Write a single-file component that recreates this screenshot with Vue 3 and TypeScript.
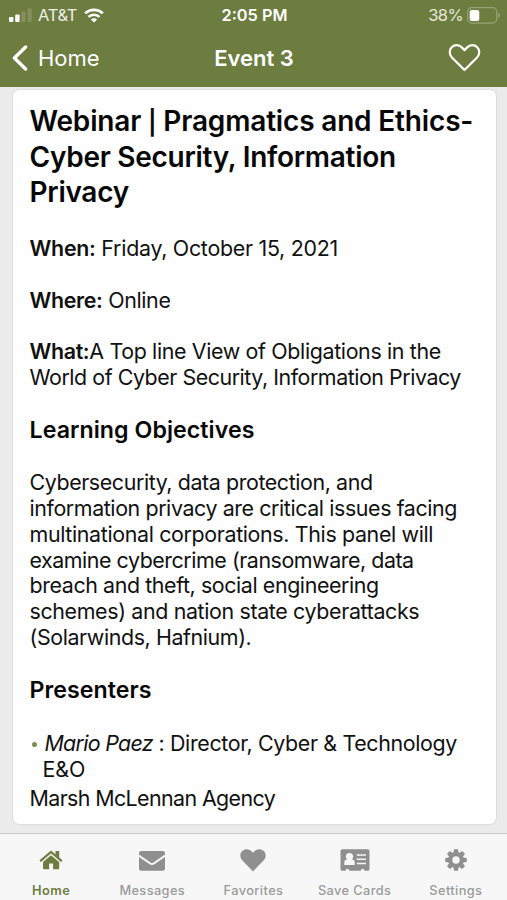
<script setup lang="ts">
interface Tab {
  id: string
  label: string
  active?: boolean
}

const tabs: Tab[] = [
  { id: 'home', label: 'Home', active: true },
  { id: 'messages', label: 'Messages' },
  { id: 'favorites', label: 'Favorites' },
  { id: 'cards', label: 'Save Cards' },
  { id: 'settings', label: 'Settings' },
]

const gearAngles: number[] = [0, 45, 90, 135, 180, 225, 270, 315]
</script>

<template>
  <div class="screen">
    <header class="top">
      <div class="status">
        <div class="carrier">
          <svg class="signal" width="23" height="14" viewBox="0 0 23 14">
            <rect x="0" y="9" width="4.4" height="5" rx="1" fill="#fff" />
            <rect x="6.2" y="6.6" width="4.4" height="7.4" rx="1" fill="#fff" />
            <rect x="12.4" y="3.6" width="4.2" height="10.4" rx="1" fill="#84915c" />
            <rect x="18.6" y="0.4" width="4.2" height="13.6" rx="1" fill="#84915c" />
          </svg>
          <span class="att">AT&amp;T</span>
          <svg class="wifi" width="20" height="15" viewBox="0 0 20 15">
            <path d="M1.2 5.4 A12.6 12.6 0 0 1 18.8 5.4" fill="none" stroke="#fff" stroke-width="2.7" />
            <path d="M4.5 8.9 A7.8 7.8 0 0 1 15.5 8.9" fill="none" stroke="#fff" stroke-width="2.5" />
            <path d="M10 14.6 L6.9 11.5 A4.4 4.4 0 0 1 13.1 11.5 Z" fill="#fff" />
          </svg>
        </div>
        <div class="clock">2:05 PM</div>
        <div class="power">
          <span class="pct">38%</span>
          <svg class="battery" width="33" height="17" viewBox="0 0 33 17">
            <rect x="0.7" y="0.7" width="29" height="15.4" rx="4" fill="none" stroke="#98a374" stroke-width="1.2" />
            <rect x="2.7" y="2.9" width="9.6" height="11" rx="2" fill="#fff" />
            <path d="M31 5.8 Q32.8 6.6 32.8 8.4 Q32.8 10.2 31 11 Z" fill="#98a374" />
          </svg>
        </div>
      </div>
      <div class="nav">
        <div class="back">
          <svg width="16" height="26" viewBox="0 0 16 26">
            <path d="M13.6 2 L2.4 13 L13.6 24" fill="none" stroke="#fff" stroke-width="3.4" stroke-linecap="round" stroke-linejoin="round" />
          </svg>
          <span class="back-label">Home</span>
        </div>
        <div class="nav-title">Event 3</div>
        <div class="fav">
          <svg width="33" height="28" viewBox="0 0 34 29">
            <path d="M17 27 L4 14 C1 10.8 .9 6.2 3.8 3.4 C6.7 .5 11.4 .6 14.2 3.5 L17 6.4 L19.8 3.5 C22.6 .6 27.3 .5 30.2 3.4 C33.1 6.2 33 10.8 30 14 Z" fill="none" stroke="#fff" stroke-width="2.3" stroke-linejoin="round" />
          </svg>
        </div>
      </div>
    </header>

    <main class="content">
      <article class="card">
        <h1 class="title">
          <span class="wide">Webinar <span class="bar">|</span> Pragmatics and Ethics-</span><br />
          Cyber Security, Information<br />
          Privacy
        </h1>
        <p class="loose"><b>When:</b> Friday, October 15, 2021</p>
        <p class="mid"><b>Where:</b> Online</p>
        <p><span class="mid"><b>What:</b>A Top line View of Obligations in the</span><br /><span class="tight">World of Cyber Security, Information Privacy</span></p>
        <h2>Learning Objectives</h2>
        <p>
          Cybersecurity, data protection, and<br />
          information privacy are critical issues facing<br />
          <span class="mid">multinational corporations. This panel will</span><br />
          <span class="tight">examine cybercrime (ransomware, data</span><br />
          breach and theft, social engineering<br />
          <span class="mid">schemes) and nation state cyberattacks</span><br />
          (Solarwinds, Hafnium).
        </p>
        <h2>Presenters</h2>
        <ul>
          <li><i class="dot"></i><span class="mid"><em>Mario Paez</em> : Director, Cyber &amp; Technology<br /><span class="eo">E&amp;O</span></span></li>
        </ul>
        <div class="org">Marsh McLennan Agency</div>
      </article>
    </main>

    <nav class="tabs">
      <div v-for="tab in tabs" :key="tab.id" class="tab" :class="{ active: tab.active }">
        <svg v-if="tab.id === 'home'" width="32" height="24" viewBox="0 0 32 24">
          <path d="M5.8 12.6 L16 4 L26.2 12.6" fill="none" stroke="currentColor" stroke-width="2.2" stroke-linecap="round" />
          <path d="M20.5 3 H24.2 V10 L20.5 6.8 Z" fill="currentColor" />
          <path d="M16 7.2 L24.2 14 V20.2 Q24.2 21.2 23.2 21.2 H18.1 V15.6 H14.1 V21.2 H9 Q8 21.2 8 20.2 V14 Z" fill="currentColor" />
        </svg>
        <svg v-else-if="tab.id === 'messages'" width="32" height="24" viewBox="0 0 32 24">
          <path d="M5.2 3 H26.8 Q29 3 29 5.2 V6.5 L17.4 14.6 Q16 15.6 14.6 14.6 L3 6.5 V5.2 Q3 3 5.2 3 Z" fill="currentColor" />
          <path d="M3 8.9 L13.6 16.3 Q16 17.9 18.4 16.3 L29 8.9 V20.6 Q29 22.8 26.8 22.8 H5.2 Q3 22.8 3 20.6 Z" fill="currentColor" />
        </svg>
        <svg v-else-if="tab.id === 'favorites'" width="32" height="24" viewBox="0 0 32 24">
          <path d="M16 23.4 L5.2 12.3 C2.6 9.5 2.7 5.2 5.5 2.8 C8.2 .4 12.1 .8 14.6 3.3 L16 4.8 L17.4 3.3 C19.9 .8 23.8 .4 26.5 2.8 C29.3 5.2 29.4 9.5 26.8 12.3 Z" fill="currentColor" />
        </svg>
        <svg v-else-if="tab.id === 'cards'" width="32" height="24" viewBox="0 0 32 24">
          <path d="M3.4 1.2 H28.6 Q30.5 1.2 30.5 3.1 V20.9 Q30.5 22.8 28.6 22.8 H25.6 Q25 20.8 23.6 20.8 Q22.2 20.8 21.6 22.8 H10.4 Q9.8 20.8 8.4 20.8 Q7 20.8 6.4 22.8 H3.4 Q1.5 22.8 1.5 20.9 V3.1 Q1.5 1.2 3.4 1.2 Z" fill="currentColor" />
          <circle cx="10.5" cy="8.6" r="3.6" fill="#f7f7f7" />
          <path d="M5.3 16.9 V14.8 Q5.3 11.7 8.2 11.6 H12.8 Q15.7 11.7 15.7 14.8 V16.9 Z" fill="#f7f7f7" />
          <path d="M17.8 6.9 H27 M17.8 11.2 H27 M17.8 15.5 H27" stroke="#f7f7f7" stroke-width="1.5" />
        </svg>
        <svg v-else width="32" height="24" viewBox="0 0 32 24">
          <g fill="currentColor">
            <path v-for="a in gearAngles" :key="a" d="M13.4 5.2 L14 1.3 H18 L18.6 5.2 Z" :transform="`rotate(${a} 16 12)`" />
          </g>
          <circle cx="16" cy="12" r="5.8" fill="none" stroke="currentColor" stroke-width="4.2" />
        </svg>
        <span class="tab-label">{{ tab.label }}</span>
      </div>
    </nav>
  </div>
</template>

<style>
body {
  margin: 0;
  background: #ebebeb;
}
</style>

<style scoped>
.screen {
  width: 507px;
  height: 900px;
  display: flex;
  flex-direction: column;
  overflow: hidden;
  background: #ebebeb;
  color: #111;
  font-family: Inter, "Liberation Sans", sans-serif;
  white-space: nowrap;
}
.top {
  height: 87px;
  flex: none;
  background: #6d7c3f;
  color: #fff;
}
.status {
  height: 30px;
  display: grid;
  grid-template-columns: 1fr auto 1fr;
  align-items: center;
  padding: 0 7px 0 9px;
  box-sizing: border-box;
}
.carrier,
.power {
  display: flex;
  align-items: center;
}
.att {
  margin-left: 6px;
  font-size: 16.5px;
  letter-spacing: -0.3px;
  color: #eef0e8;
}
.wifi {
  margin-left: 7px;
}
.clock {
  font-size: 16.3px;
  font-weight: 600;
}
.power {
  justify-content: flex-end;
}
.pct {
  font-size: 16.5px;
  letter-spacing: -0.6px;
  margin-right: 4px;
  color: #e6e9dc;
}
.nav {
  height: 55px;
  display: grid;
  grid-template-columns: 1fr auto 1fr;
  align-items: center;
  padding: 0 11px 0 12px;
  box-sizing: border-box;
}
.back,
.fav {
  display: flex;
  align-items: center;
}
.back-label {
  margin-left: 10px;
  font-size: 22px;
}
.nav-title {
  font-size: 22px;
  font-weight: 600;
}
.fav {
  justify-content: flex-end;
  padding-right: 15px;
}
.content {
  flex: 1;
  padding: 3px 11.5px 0 12.5px;
}
.card {
  height: 734px;
  box-sizing: border-box;
  padding: 14px 17px 0;
  background: #fefefe;
  border-radius: 6px;
  box-shadow: 0 0 2px rgba(0, 0, 0, 0.18);
  font-size: 21.4px;
  line-height: 25.75px;
  letter-spacing: -0.4px;
}
.loose {
  letter-spacing: -0.27px;
}
.mid {
  letter-spacing: -0.35px;
}
.tight {
  letter-spacing: -0.45px;
}
.title {
  margin: 0 0 25.4px;
  font-size: 28px;
  line-height: 35.6px;
  font-weight: 600;
  letter-spacing: -0.28px;
  color: #080808;
}
.wide {
  letter-spacing: -0.17px;
}
.bar {
  font-size: 24px;
  line-height: 1;
}
p {
  margin: 0 0 25.6px;
}
b {
  font-weight: 600;
}
h2 {
  margin: 0 0 25.4px;
  font-size: 23.2px;
  line-height: 29px;
  font-weight: 600;
  letter-spacing: 0.05px;
  color: #080808;
}
ul {
  list-style: none;
  margin: 0;
  padding: 0.6px 0 0;
}
li {
  display: flex;
}
.dot {
  flex: none;
  width: 5px;
  height: 5px;
  margin: 10.8px 6px 0 2px;
  border-radius: 50%;
  background: #7c8b4e;
}
em {
  padding-left: 2px;
  letter-spacing: -0.7px;
}
.eo {
  letter-spacing: -0.1px;
}
.org {
  margin-top: 3.8px;
  letter-spacing: -0.6px;
}
.tabs {
  height: 67px;
  flex: none;
  box-sizing: border-box;
  border-top: 1px solid #c9c9c9;
  background: #f7f7f7;
  display: grid;
  grid-template-columns: repeat(5, 101.2px);
  padding-left: 0.5px;
}
.tab {
  display: flex;
  flex-direction: column;
  align-items: center;
  padding-top: 14px;
  color: #8f8f8f;
}
.tab-label {
  margin-top: 11px;
  font-size: 12.8px;
  line-height: 16px;
  font-weight: 500;
  letter-spacing: 0.4px;
  color: #9a9a9a;
}
.active,
.active .tab-label {
  color: #6d7c3f;
}
.active .tab-label {
  font-weight: 600;
}
</style>
